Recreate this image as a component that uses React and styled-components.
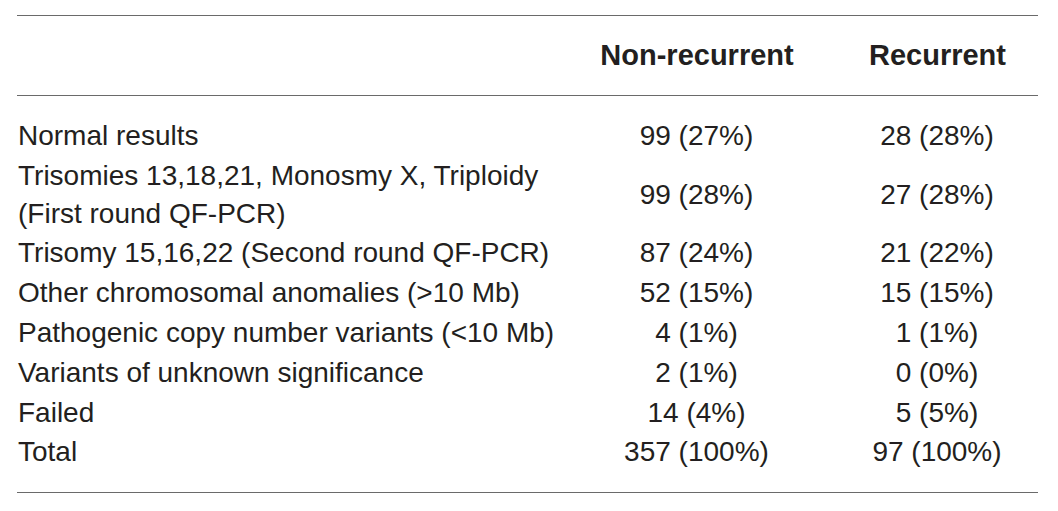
import React from "react";
import styled, { createGlobalStyle } from "styled-components";

const rows = [
  { label: ["Normal results"], nonRec: "99 (27%)", rec: "28 (28%)" },
  {
    label: ["Trisomies 13,18,21, Monosmy X, Triploidy", "(First round QF-PCR)"],
    nonRec: "99 (28%)",
    rec: "27 (28%)",
  },
  { label: ["Trisomy 15,16,22 (Second round QF-PCR)"], nonRec: "87 (24%)", rec: "21 (22%)" },
  { label: ["Other chromosomal anomalies (>10 Mb)"], nonRec: "52 (15%)", rec: "15 (15%)" },
  { label: ["Pathogenic copy number variants (<10 Mb)"], nonRec: "4 (1%)", rec: "1 (1%)" },
  { label: ["Variants of unknown significance"], nonRec: "2 (1%)", rec: "0 (0%)" },
  { label: ["Failed"], nonRec: "14 (4%)", rec: "5 (5%)" },
  { label: ["Total"], nonRec: "357 (100%)", rec: "97 (100%)" },
];

export default function App() {
  return (
    <>
      <GlobalStyle />
      <S.Page>
        <S.Table>
          <colgroup>
            <S.Col $width={560} />
            <S.Col $width={240} />
            <S.Col $width={221} />
          </colgroup>
          <thead>
            <tr>
              <S.HeadCell />
              <S.HeadCell>Non-recurrent</S.HeadCell>
              <S.HeadCell $last>Recurrent</S.HeadCell>
            </tr>
          </thead>
          <tbody>
            {rows.map((row) => (
              <S.Row key={row.label[0]}>
                <S.Label>
                  {row.label.map((line) => (
                    <S.Line key={line}>{line}</S.Line>
                  ))}
                </S.Label>
                <S.Value>{row.nonRec}</S.Value>
                <S.Value $last>{row.rec}</S.Value>
              </S.Row>
            ))}
          </tbody>
        </S.Table>
      </S.Page>
    </>
  );
}

const GlobalStyle = createGlobalStyle`
  body {
    margin: 0;
    background: #fff;
  }
`;

const S = {};

S.Page = styled.div`
  padding: 15px 20px 0 17px;
  font-family: "Liberation Sans", Arial, sans-serif;
  color: #231f20;
`;

S.Table = styled.table`
  width: 1021px;
  table-layout: fixed;
  border-collapse: collapse;
  border-top: 1px solid #6a6a6a;
  border-bottom: 1px solid #6a6a6a;
`;

S.Col = styled.col`
  width: ${({ $width }) => $width}px;
`;

S.HeadCell = styled.th`
  height: 79px;
  padding: 0 0 0 ${({ $last }) => ($last ? "20px" : "0")};
  border-bottom: 1px solid #6a6a6a;
  font-size: 29px;
  font-weight: 700;
  line-height: 1;
  text-align: center;
  vertical-align: middle;
`;

S.Row = styled.tr`
  td {
    padding-top: 0.9px;
    padding-bottom: 0.9px;
  }
  &:first-child td {
    padding-top: 20.9px;
  }
  &:last-child td {
    padding-bottom: 20.9px;
  }
`;

S.Label = styled.td`
  font-size: 28px;
  line-height: 38px;
  text-align: left;
  vertical-align: middle;
  white-space: nowrap;
`;

S.Line = styled.div``;

S.Value = styled.td`
  padding-left: ${({ $last }) => ($last ? "20px" : "0")};
  font-size: 28px;
  line-height: 38px;
  text-align: center;
  vertical-align: middle;
  white-space: nowrap;
`;
